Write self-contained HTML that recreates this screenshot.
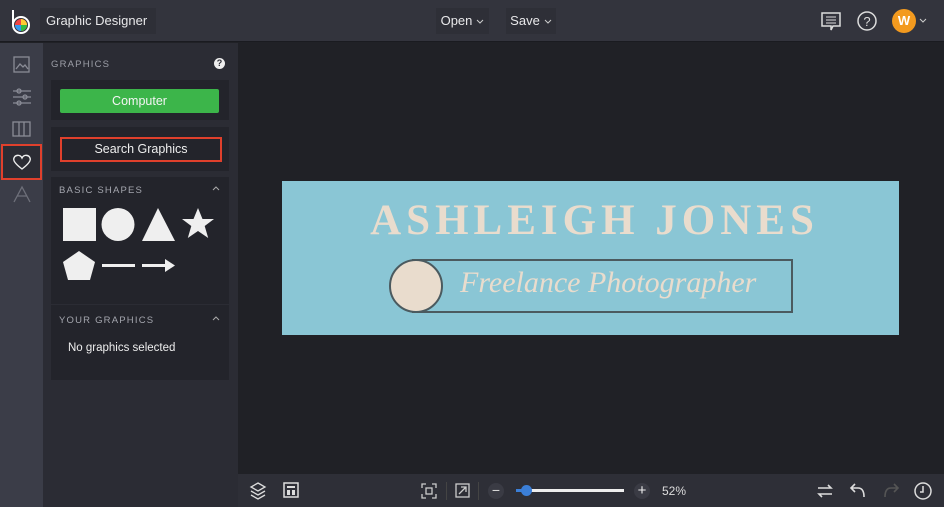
<!DOCTYPE html><html><head><style>
*{margin:0;padding:0;box-sizing:border-box}
body{width:944px;height:507px;overflow:hidden;background:#202126;font-family:"Liberation Sans",sans-serif;position:relative}
.a{position:absolute}
.ic{stroke:#8a8c96;fill:none;stroke-width:1.3}
.cv{display:inline-block;vertical-align:middle;margin-left:4px}
</style></head><body>
<div class="a" style="left:0;top:0;width:944px;height:42px;background:#33343d;border-bottom:1px solid #1a1b20"></div>
<svg class="a" style="left:10px;top:8px" width="24" height="28"><line x1="3" y1="2" x2="3" y2="16" stroke="#fff" stroke-width="2"/><circle cx="11" cy="17" r="8" fill="none" stroke="#fff" stroke-width="2"/><circle cx="11" cy="17" r="6" fill="#e44"/><path d="M11 17 L11 11 A6 6 0 0 1 17 17Z" fill="#fc3"/><path d="M11 17 L17 17 A6 6 0 0 1 11 23Z" fill="#3b4"/><path d="M11 17 L11 23 A6 6 0 0 1 5 17Z" fill="#39e"/></svg>
<div class="a" style="left:40px;top:8px;width:116px;height:26px;background:#2e2f37;color:#e8e8ea;font-size:13px;line-height:26px;padding-left:6px">Graphic Designer<svg class="cv" width="8" height="6"><path d="M1 1l3 3 3-3" stroke="#ccc" fill="none"/></svg></div>
<div class="a" style="left:436px;top:8px;width:53px;height:26px;background:#2e2f37;color:#e8e8ea;font-size:13px;line-height:26px;text-align:center">Open<svg class="cv" width="8" height="6"><path d="M1 1l3 3 3-3" stroke="#ccc" fill="none"/></svg></div>
<div class="a" style="left:506px;top:8px;width:50px;height:26px;background:#2e2f37;color:#e8e8ea;font-size:13px;line-height:26px;text-align:center">Save<svg class="cv" width="8" height="6"><path d="M1 1l3 3 3-3" stroke="#ccc" fill="none"/></svg></div>
<svg class="a" style="left:820px;top:11px" width="22" height="22"><path d="M2 2h18v13h-7l-2 4v-4H2z" fill="none" stroke="#ddd" stroke-width="1.5"/><path d="M6 6h10M6 9h10M6 12h10" stroke="#ddd"/></svg>
<svg class="a" style="left:856px;top:10px" width="22" height="22"><circle cx="11" cy="11" r="9" fill="none" stroke="#ddd" stroke-width="1.5"/><text x="11" y="16" fill="#ddd" font-size="13" text-anchor="middle" font-family="Liberation Sans">?</text></svg>
<div class="a" style="left:892px;top:9px;width:24px;height:24px;border-radius:50%;background:#f39a1f;color:#fff;font-weight:bold;font-size:13px;line-height:24px;text-align:center">W</div>
<svg class="a" style="left:919px;top:18px" width="8" height="6"><path d="M1 1l3 3 3-3" stroke="#ccc" fill="none"/></svg>
<div class="a" style="left:0;top:43px;width:43px;height:464px;background:#3b3d48"></div>
<svg class="a" style="left:12px;top:55px" width="20" height="20"><rect x="2" y="2" width="15" height="15" class="ic"/><path d="M4 14l4-5 3 3 2-2 3 4" class="ic"/></svg>
<svg class="a" style="left:11px;top:87px" width="22" height="20"><path d="M2 4h18M2 10h18M2 16h18" class="ic"/><circle cx="8" cy="4" r="2" fill="#3b3d48" class="ic"/><circle cx="14" cy="10" r="2" fill="#3b3d48" class="ic"/><circle cx="8" cy="16" r="2" fill="#3b3d48" class="ic"/></svg>
<svg class="a" style="left:11px;top:120px" width="22" height="18"><rect x="2" y="2" width="17" height="14" class="ic"/><path d="M8 2v14M13 2v14" class="ic"/></svg>
<div class="a" style="left:1px;top:144px;width:41px;height:36px;border:2px solid #e0402c;background:#2b2c34"></div>
<svg class="a" style="left:12px;top:153px" width="20" height="18"><path d="M10 16 C2 10 1 7 2 5 C3 2 8 1 10 5 C12 1 17 2 18 5 C19 7 18 10 10 16Z" fill="none" stroke="#eee" stroke-width="1.4"/></svg>
<svg class="a" style="left:12px;top:185px" width="20" height="18"><path d="M2 17L10 2l8 15M5 11h10" class="ic" style="stroke:#6e707a"/></svg>
<div class="a" style="left:43px;top:43px;width:195px;height:464px;background:#2b2c34"></div>
<div class="a" style="left:51px;top:59px;color:#9d9fa8;font-size:9.5px;letter-spacing:1.2px">GRAPHICS</div>
<div class="a" style="left:214px;top:58px;width:11px;height:11px;border-radius:50%;background:#eee;color:#2b2c34;font-size:9px;font-weight:bold;text-align:center;line-height:11px">?</div>
<div class="a" style="left:51px;top:80px;width:178px;height:40px;background:#23242b"></div>
<div class="a" style="left:60px;top:89px;width:159px;height:24px;background:#3cb54a;border-radius:2px;color:#f4f4f4;font-size:12.5px;text-align:center;line-height:24px">Computer</div>
<div class="a" style="left:51px;top:127px;width:178px;height:44px;background:#23242b"></div>
<div class="a" style="left:60px;top:137px;width:162px;height:25px;border:2px solid #e0402c;color:#eee;font-size:12.5px;text-align:center;line-height:21px">Search Graphics</div>
<div class="a" style="left:51px;top:177px;width:178px;height:203px;background:#23242b"></div>
<div class="a" style="left:59px;top:185px;color:#a4a6ae;font-size:9.5px;letter-spacing:1.2px">BASIC SHAPES</div>
<svg class="a" style="left:212px;top:186px" width="8" height="6"><path d="M1 4l3-3 3 3" stroke="#aaa" fill="none"/></svg>
<svg class="a" style="left:60px;top:206px" width="160" height="80"><rect x="3" y="2" width="33" height="33" fill="#efefef"/><circle cx="58" cy="18.5" r="16.5" fill="#efefef"/><path d="M98 2 L115 35 H82Z" fill="#efefef"/><path d="M138 2l4.5 11h11.5l-9.3 7 3.5 12-10.2-7-10.2 7 3.5-12-9.3-7h11.5z" fill="#efefef"/><path d="M19 45 L35 56 L30 74 H8 L3 56Z" fill="#efefef"/><rect x="42" y="58" width="33" height="3" fill="#efefef"/><rect x="82" y="58" width="25" height="3" fill="#efefef"/><path d="M105 53 L115 59.5 L105 66Z" fill="#efefef"/></svg>
<div class="a" style="left:51px;top:304px;width:178px;height:1px;background:#2b2c34"></div>
<div class="a" style="left:59px;top:315px;color:#a4a6ae;font-size:9.5px;letter-spacing:1.2px">YOUR GRAPHICS</div>
<svg class="a" style="left:212px;top:316px" width="8" height="6"><path d="M1 4l3-3 3 3" stroke="#aaa" fill="none"/></svg>
<div class="a" style="left:68px;top:342px;color:#eee;font-size:11.5px">No graphics selected</div>
<div class="a" style="left:282px;top:181px;width:617px;height:154px;background:#8ac6d5"></div>
<div class="a" style="left:286px;top:196px;width:617px;text-align:center;color:#e9dccd;font-family:'Liberation Serif',serif;font-weight:bold;font-size:43px;letter-spacing:5px">ASHLEIGH JONES</div>
<div class="a" style="left:412px;top:259px;width:381px;height:54px;border:2px solid #4b5a5f"></div>
<div class="a" style="left:389px;top:259px;width:54px;height:54px;border-radius:50%;background:#e9dccd;border:2px solid #4b5a5f"></div>
<div class="a" style="left:460px;top:266px;color:#e9dccd;font-family:'Liberation Serif',serif;font-style:italic;font-size:30px">Freelance Photographer</div>
<div class="a" style="left:238px;top:474px;width:706px;height:33px;background:#2e2f37"></div>
<svg class="a" style="left:248px;top:481px" width="20" height="20"><path d="M10 2l7 4-7 4-7-4z M3 10l7 4 7-4 M3 14l7 4 7-4" class="ic" style="stroke:#ddd"/></svg>
<svg class="a" style="left:282px;top:481px" width="18" height="18"><rect x="2" y="2" width="14" height="14" fill="none" stroke="#ddd" stroke-width="1.5"/><rect x="5" y="5" width="8" height="2" fill="#ddd"/><rect x="5" y="9" width="3" height="5" fill="#ddd"/><rect x="10" y="9" width="3" height="5" fill="#ddd"/></svg>
<svg class="a" style="left:421px;top:483px" width="16" height="16"><path d="M1 5V1h4M11 1h4v4M15 11v4h-4M5 15H1v-4" class="ic" style="stroke:#ccc"/><rect x="5" y="5" width="6" height="6" class="ic" style="stroke:#ccc"/></svg>
<div class="a" style="left:446px;top:482px;width:1px;height:18px;background:#444"></div>
<svg class="a" style="left:455px;top:483px" width="16" height="16"><rect x="1" y="1" width="13" height="13" class="ic" style="stroke:#ccc"/><path d="M4 11l7-7M6 4h5v5" class="ic" style="stroke:#ccc"/></svg>
<div class="a" style="left:478px;top:482px;width:1px;height:18px;background:#444"></div>
<div class="a" style="left:488px;top:483px;width:16px;height:16px;border-radius:50%;background:#3a3b44;color:#ddd;font-size:14px;line-height:15px;text-align:center">−</div>
<div class="a" style="left:516px;top:489px;width:108px;height:3px;background:#eee"></div>
<div class="a" style="left:516px;top:489px;width:10px;height:3px;background:#3b7fd8"></div>
<div class="a" style="left:521px;top:485px;width:11px;height:11px;border-radius:50%;background:#3b7fd8"></div>
<div class="a" style="left:634px;top:483px;width:16px;height:16px;border-radius:50%;background:#3a3b44;color:#eee;font-size:15px;line-height:15px;text-align:center">+</div>
<div class="a" style="left:662px;top:484px;color:#ddd;font-size:12px">52%</div>
<svg class="a" style="left:816px;top:482px" width="18" height="18"><path d="M2 6h13l-3-3M16 12H3l3 3" class="ic" style="stroke:#ddd;stroke-width:1.6"/></svg>
<svg class="a" style="left:849px;top:481px" width="18" height="18"><path d="M6 3L2 7l4 4M2 7h7c4 0 6 3 6 9" class="ic" style="stroke:#ddd;stroke-width:1.6"/></svg>
<svg class="a" style="left:882px;top:481px" width="18" height="18"><path d="M12 3l4 4-4 4M16 7H9c-4 0-6 3-6 9" class="ic" style="stroke:#555;stroke-width:1.6"/></svg>
<svg class="a" style="left:913px;top:481px" width="20" height="20"><circle cx="10" cy="10" r="8" class="ic" style="stroke:#ddd;stroke-width:1.5"/><path d="M10 5v6h-3" class="ic" style="stroke:#ddd;stroke-width:1.5"/></svg>
</body></html>
